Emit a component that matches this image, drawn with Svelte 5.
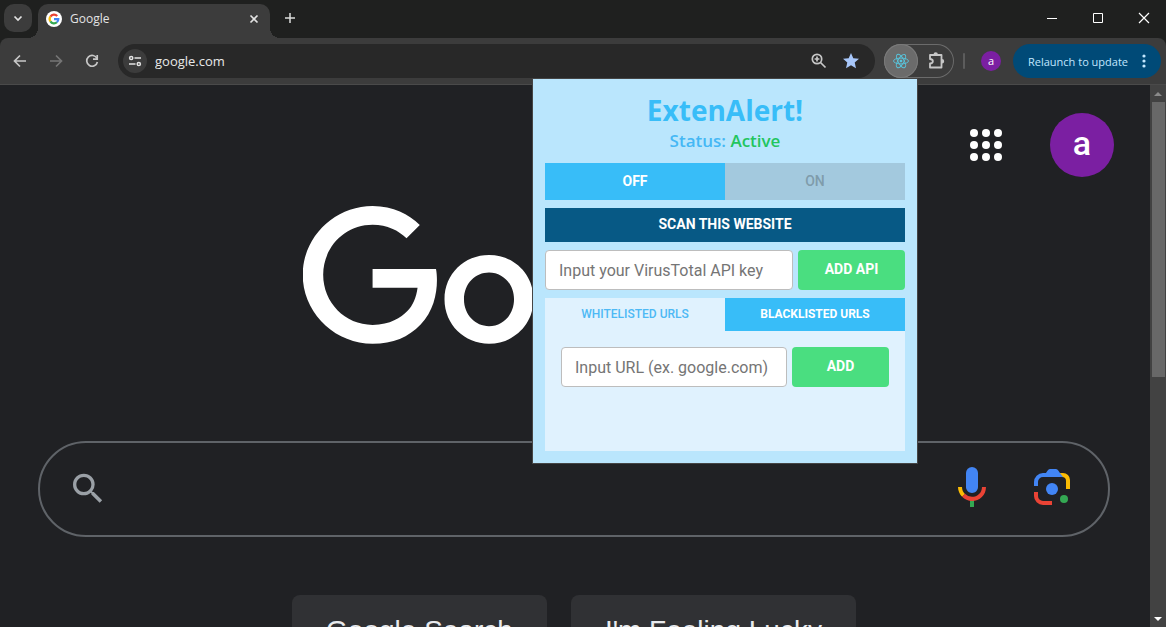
<script>
  let apiKey = $state('');
  let url = $state('');
  let query = $state('');
  let address = $state('google.com');
  let list = $state('white');
  const dots = [0, 1, 2, 3, 4, 5, 6, 7, 8];
</script>

<div class="browser">
  <header class="tabstrip">
    <button class="tab-search" aria-label="Search tabs">
      <svg width="28" height="28" viewBox="0 0 28 28"><path d="M10.500 12.500 14 16l3.500-3.500" fill="none" stroke="#e3e3e3" stroke-width="1.700" /></svg>
    </button>
    <div class="tab">
      <svg class="favicon" width="16" height="16" viewBox="0 0 16 16">
        <circle cx="8" cy="8" r="8" fill="#fff" />
        <g fill="none" stroke-width="2.200">
          <path d="M4.400 5.600A4.300 4.300 0 0 1 11.200 5.100" stroke="#ea4335" />
          <path d="M4.400 10.400A4.300 4.300 0 0 1 4.400 5.600" stroke="#fbbc05" />
          <path d="M10.900 11.300A4.300 4.300 0 0 1 4.400 10.400" stroke="#34a853" />
          <path d="M8 8.200H12.300A4.300 4.300 0 0 1 10.900 11.300" stroke="#4285f4" />
        </g>
      </svg>
      <span class="tab-title">Google</span>
      <button class="plain close" aria-label="Close tab">
        <svg width="16" height="16" viewBox="0 0 16 16"><path d="m4.500 4.500 7 7m0-7-7 7" stroke="#e3e3e3" stroke-width="1.600" /></svg>
      </button>
    </div>
    <button class="plain newtab" aria-label="New tab">
      <svg width="16" height="16" viewBox="0 0 16 16"><path d="M8 3v10M3 8h10" stroke="#dcdcdc" stroke-width="1.500" /></svg>
    </button>
    <div class="window-controls">
      <button class="plain" aria-label="Minimize"><svg width="12" height="12"><path d="M1 6.500h10" stroke="#fff" /></svg></button>
      <button class="plain" aria-label="Maximize"><svg width="12" height="12"><path d="M1.500 1.500h9v9h-9z" fill="none" stroke="#fff" /></svg></button>
      <button class="plain" aria-label="Close"><svg width="12" height="12"><path d="m1 1 10 10M11 1 1 11" stroke="#fff" stroke-width="1.200" /></svg></button>
    </div>
  </header>

  <nav class="toolbar">
    <div class="nav-buttons">
      <button class="plain" aria-label="Back"><svg width="16" height="16" viewBox="0 0 16 16"><path d="M14 8H3M8 2.500 2.500 8 8 13.500" fill="none" stroke="#c7c7c7" stroke-width="1.700" /></svg></button>
      <button class="plain" aria-label="Forward"><svg width="16" height="16" viewBox="0 0 16 16"><path d="M2 8h11M8 2.500 13.500 8 8 13.500" fill="none" stroke="#757575" stroke-width="1.700" /></svg></button>
      <button class="plain" aria-label="Reload"><svg width="16" height="16" viewBox="0 0 16 16"><path d="M13 5.500A5.400 5.400 0 1 0 13.400 9" fill="none" stroke="#c7c7c7" stroke-width="1.700" /><path d="M13.200 2v4.200H9" fill="none" stroke="#c7c7c7" stroke-width="1.700" /></svg></button>
    </div>
    <div class="omnibox">
      <button class="plain site-info" aria-label="View site information">
        <svg width="14" height="14" viewBox="0 0 14 14" fill="none" stroke="#e3e3e3" stroke-width="1.500"><circle cx="3.200" cy="4" r="1.600" /><path d="M6.500 4H13M1 10h6.500" /><circle cx="10.800" cy="10" r="1.600" /></svg>
      </button>
      <input class="address" aria-label="Address" bind:value={address} />
      <button class="plain" aria-label="Zoom"><svg width="18" height="18" viewBox="0 0 18 18" fill="none" stroke="#c7c7c7" stroke-width="1.700"><circle cx="7" cy="7" r="4.700" /><path d="m10.500 10.500 5 5M7 4.600v4.800M4.600 7h4.800" /></svg></button>
      <button class="plain" aria-label="Bookmark"><svg width="18" height="18" viewBox="0 0 18 18"><path d="m9 1 2.300 5.300 5.700.5-4.300 3.800 1.300 5.700L9 13.300l-5 3 1.300-5.700L1 6.800l5.700-.5z" fill="#a8c7fa" /></svg></button>
    </div>
    <div class="extensions">
      <button class="plain active-ext" aria-label="ExtenAlert">
        <svg width="18" height="18" viewBox="0 0 18 18" fill="none" stroke="#58c4dc" stroke-width=".9"><ellipse cx="9" cy="9" rx="7.500" ry="2.900" /><ellipse cx="9" cy="9" rx="7.500" ry="2.900" transform="rotate(60 9 9)" /><ellipse cx="9" cy="9" rx="7.500" ry="2.900" transform="rotate(120 9 9)" /><circle cx="9" cy="9" r="1" fill="#61dafb" /></svg>
      </button>
      <button class="plain" aria-label="Extensions">
        <svg width="20" height="20" viewBox="0 0 20 20"><path d="M4 4h11.500v12.500H4v-4c3.800-.2 3.800-4.300 0-4.500z" fill="none" stroke="#c7c7c7" stroke-width="1.800" stroke-linejoin="round" /><path d="M7.500 3.500a2.200 2.200 0 0 1 4.400 0zM16 8a2.200 2.200 0 0 1 0 4.400z" fill="#c7c7c7" /></svg>
      </button>
    </div>
    <span class="divider"></span>
    <button class="plain profile">a</button>
    <button class="relaunch">Relaunch to update
      <svg width="4" height="16" viewBox="0 0 4 16" fill="#c2e7ff"><circle cx="2" cy="3" r="1.600" /><circle cx="2" cy="8" r="1.600" /><circle cx="2" cy="13" r="1.600" /></svg>
    </button>
  </nav>

  <div class="viewport">
    <main class="page">
      <div class="account">
        <button class="plain" aria-label="Google apps">
          <svg width="32" height="32" viewBox="0 0 32 32" fill="#fff">
            {#each dots as n}<circle cx={4 + (n % 3) * 12} cy={4 + Math.floor(n / 3) * 12} r="4" />{/each}
          </svg>
        </button>
        <button class="plain avatar">a</button>
      </div>
      <svg class="logo" viewBox="0.5 0 272 92" fill="#fff" role="img" aria-label="Google">
        <path d="M35.290 41.410V32H67c.31 1.640.47 3.580.47 5.680 0 7.060-1.930 15.790-8.150 22.010-6.050 6.300-13.780 9.660-24.020 9.660C16.320 69.350.36 53.890.36 34.910.36 15.930 16.320.47 35.300.47c10.500 0 17.980 4.120 23.600 9.490l-6.640 6.640c-4.030-3.780-9.490-6.720-16.970-6.720-13.860 0-24.700 11.170-24.700 25.030 0 13.860 10.840 25.030 24.700 25.030 8.990 0 14.110-3.610 17.390-6.890 2.660-2.660 4.410-6.460 5.100-11.650z" />
        <path d="M115.750 47.180c0 12.770-9.990 22.180-22.250 22.180s-22.250-9.410-22.250-22.180C71.250 34.320 81.240 25 93.500 25s22.250 9.320 22.250 22.180zm-9.740 0c0-7.980-5.790-13.440-12.510-13.440S80.990 39.200 80.990 47.180c0 7.900 5.790 13.440 12.510 13.440s12.510-5.550 12.510-13.440z" />
      </svg>
      <form class="search" onsubmit={(e) => e.preventDefault()}>
        <div class="searchbox">
          <svg width="40" height="40" viewBox="0 -1 24 24" fill="#9aa0a6"><path d="M15.500 14h-.79l-.28-.27A6.471 6.471 0 0 0 16 9.500 6.500 6.500 0 1 0 9.500 16c1.610 0 3.090-.59 4.230-1.570l.27.28v.79l5 4.990L20.490 19l-4.990-5zm-6 0C7.010 14 5 11.990 5 9.500S7.010 5 9.500 5 14 7.010 14 9.500 11.990 14 9.500 14z" /></svg>
          <input aria-label="Search" bind:value={query} />
          <button class="plain" aria-label="Search by voice">
            <svg width="48" height="48" viewBox="0 0 24 24"><path fill="#4285f4" d="M12 15c1.660 0 3-1.310 3-2.970V4.970a3 3 0 0 0-6 0v7.060C9 13.690 10.340 15 12 15z" /><path fill="#34a853" d="M11 18.080h2V22h-2z" /><path fill="#fbbc05" d="M7.050 16.870C5.780 15.590 5 13.850 5 12h2c0 1.380.56 2.630 1.470 3.540z" /><path fill="#ea4335" d="M12 16.930a4.970 5.250 0 0 1-3.540-1.550l-1.410 1.490C8.310 18.140 10.050 19 12 19c3.870 0 6.990-2.920 6.990-7h-1.990c0 2.920-2.240 4.930-5 4.930z" /></svg>
          </button>
          <button class="plain" aria-label="Search by image">
            <svg width="48" height="48" viewBox="0 0 48 48"><path d="M8 23v-4a7 7 0 0 1 7-7h5" fill="none" stroke="#4285f4" stroke-width="4" /><path d="M31 10H35a7 7 0 0 1 7 7v9h-4v-8a4 4 0 0 0-4-4z" fill="#fbbc04" /><path d="M17 10.500c1.800 0 2.300-4.500 5-4.500h6c2 0 2.700 2.500 4 4l3 4H17z" fill="#4285f4" /><path d="M8 29v4a7 7 0 0 0 7 7h9" fill="none" stroke="#ea4335" stroke-width="4" /><circle cx="24" cy="26" r="6" fill="#4285f4" /><circle cx="36" cy="36" r="4" fill="#34a853" /></svg>
          </button>
        </div>
        <div class="actions">
          <button type="submit">Google Search</button>
          <button type="button">I'm Feeling Lucky</button>
        </div>
      </form>
    </main>
    <div class="scrollbar">
      <svg width="16" height="16"><path d="m4 11 4-4 4 4z" fill="#8a8a8a" /></svg>
      <div class="track"><div class="thumb"></div></div>
      <svg width="16" height="16"><path d="m4 6 4 4 4-4z" fill="#fff" /></svg>
    </div>
  </div>

  <section class="popup">
    <div class="heading">
      <h1>ExtenAlert!</h1>
      <p>Status: <span>Active</span></p>
    </div>
    <div class="toggle">
      <button>OFF</button>
      <button disabled>ON</button>
    </div>
    <button class="scan">SCAN THIS WEBSITE</button>
    <div class="entry">
      <input aria-label="VirusTotal API key" placeholder="Input your VirusTotal API key" bind:value={apiKey} />
      <button class="wide">ADD API</button>
    </div>
    <div class="lists">
      <div class="tabs">
        <button class:selected={list === 'white'} onclick={() => (list = 'white')}>WHITELISTED URLS</button>
        <button class:selected={list === 'black'} onclick={() => (list = 'black')}>BLACKLISTED URLS</button>
      </div>
      <div class="panel">
        <div class="entry">
          <input aria-label="URL" placeholder="Input URL (ex. google.com)" bind:value={url} />
          <button>ADD</button>
        </div>
      </div>
    </div>
  </section>
</div>

<style>
  :global(body) { margin: 0; background: #202124; }
  .browser, .browser * { box-sizing: border-box; }
  .browser {
    position: relative;
    display: flex;
    flex-direction: column;
    height: 100vh;
    overflow: hidden;
    background: #1f201f;
    font-family: "Open Sans", "Noto Sans", sans-serif;
  }
  button, input { font: inherit; border: 0; margin: 0; padding: 0; }
  input { min-width: 0; outline: 0; }
  svg { display: block; flex: none; }
  .plain { display: grid; place-items: center; background: none; color: inherit; }

  .tabstrip { display: flex; flex: none; height: 38px; padding: 4px 0 0 4px; }
  .tab-search { width: 28px; height: 28px; border-radius: 10px; background: #3c3c3c; }
  .tab {
    position: relative;
    display: flex;
    align-items: center;
    gap: 8px;
    width: 232px;
    margin-left: 6px;
    padding: 0 8px 5px;
    border-radius: 10px 10px 0 0;
    background: #3c3c3c;
    color: #e3e3e3;
    font-size: 12px;
  }
  .tab::before, .tab::after { content: ''; position: absolute; bottom: 0; width: 10px; height: 10px; }
  .tab::before { left: -10px; background: radial-gradient(circle at 0 0, transparent 10px, #3c3c3c 10px); }
  .tab::after { right: -10px; background: radial-gradient(circle at 100% 0, transparent 10px, #3c3c3c 10px); }
  .tab-title { flex: 1; }
  .newtab { width: 28px; height: 28px; margin-left: 6px; }
  .window-controls { display: flex; margin: 0 -1px 0 auto; height: 28px; }
  .window-controls button { width: 46px; }

  .toolbar {
    display: flex;
    flex: none;
    align-items: center;
    height: 47px;
    padding: 0 5px 0 2px;
    border-bottom: 1px solid #4a4a4a;
    border-radius: 8px 8px 0 0;
    background: #3c3c3c;
  }
  .nav-buttons { display: flex; margin-right: 8px; }
  .nav-buttons button { width: 36px; height: 34px; }
  .omnibox {
    display: flex;
    flex: 1;
    align-items: center;
    gap: 14px;
    height: 34px;
    padding: 0 15px 0 5px;
    border-radius: 17px;
    background: #282828;
  }
  .site-info { width: 24px; height: 24px; margin-right: -6px; border-radius: 50%; background: #3c3c3c; }
  .address { flex: 1; background: none; color: #e8e8e8; font-size: 13px; }
  .extensions { display: flex; width: 70px; height: 34px; margin-left: 9px; border-radius: 17px; box-shadow: inset 0 0 0 1px #6b6b6b; }
  .extensions button { flex: 1; }
  .extensions .active-ext { flex: none; width: 34px; border-radius: 50%; background: #6b6b6b; box-shadow: inset 0 0 0 1px #7a7a7a; }
  .divider { width: 2px; height: 16px; margin: 0 16px 0 9px; border-radius: 1px; background: #5c5c5c; }
  .profile { width: 20px; height: 20px; border-radius: 50%; background: #7b1fa2; color: #fff; font-size: 11px; line-height: 18px; }
  .relaunch {
    display: flex;
    align-items: center;
    justify-content: space-between;
    width: 148px;
    height: 34px;
    margin-left: 12px;
    padding: 0 15px;
    border-radius: 17px;
    background: #004a77;
    color: #c2e7ff;
    font-size: 11px;
    white-space: nowrap;
  }

  .viewport { display: flex; flex: 1; min-height: 0; background: #202124; }
  .page { display: flex; flex: 1; flex-direction: column; align-items: center; min-width: 0; overflow: hidden; }
  .account { display: flex; flex: none; align-self: flex-end; align-items: center; gap: 48px; padding: 28px 36px; }
  .avatar {
    width: 64px;
    height: 64px;
    padding-bottom: 4px;
    border-radius: 50%;
    background: #7b1fa2;
    color: #fff;
    font-family: Roboto, sans-serif;
    font-size: 34px;
    font-weight: 500;
  }
  .logo { width: 544px; height: 184px; }
  .search { display: flex; flex: none; flex-direction: column; align-items: center; align-self: stretch; margin-top: 52px; padding: 0 40px 0 38px; }
  .searchbox {
    display: flex;
    align-items: center;
    gap: 32px;
    width: 100%;
    max-width: 1168px;
    height: 96px;
    padding: 0 32px 4px 28px;
    border: 2px solid #5f6368;
    border-radius: 48px;
  }
  .searchbox input { flex: 1; background: none; color: #e8eaed; font-size: 32px; }
  .actions { display: flex; gap: 24px; margin-top: 58px; }
  .actions button {
    height: 72px;
    padding: 0 34px;
    border-radius: 8px;
    background: #303134;
    color: #e8eaed;
    font-family: "Liberation Sans", Arial, sans-serif;
    font-size: 28px;
  }

  .scrollbar { display: flex; flex: none; flex-direction: column; width: 16px; background: #424242; }
  .track { flex: 1; padding: 1px 1px 0 2px; }
  .thumb { height: 54%; background: #686868; }

  .popup {
    position: absolute;
    top: 79px;
    right: 249px;
    display: flex;
    flex-direction: column;
    gap: 8px;
    width: 384px;
    padding: 12px;
    background: #bae6fd;
    box-shadow: 0 0 0 1px #454545;
  }
  .heading { padding-bottom: 2px; text-align: center; color: #38bdf8; }
  h1 { margin: 0; font-size: 28px; line-height: 38px; font-weight: 700; }
  p { margin: 0; font-size: 17px; line-height: 24px; font-weight: 600; color: #45b8f5; }
  p span { color: #22c55e; }
  .popup button { font-family: Roboto, sans-serif; font-size: 14px; font-weight: 700; color: #fff; }
  .toggle, .tabs { display: grid; grid-template-columns: 1fr 1fr; }
  .toggle button { height: 37px; padding-bottom: 2px; background: #38bdf8; }
  .toggle button:disabled { background: #a3c9de; color: #7f9cab; font-weight: 500; }
  .popup .scan { height: 34px; padding-bottom: 2px; background: #075985; }
  .entry { display: flex; gap: 5px; }
  .entry input {
    flex: 1;
    height: 40px;
    padding: 0 13px;
    border: 1px solid #bdbdbd;
    border-radius: 4px;
    background: #fff;
    color: #333;
    font-family: Roboto, sans-serif;
    font-size: 16px;
  }
  .entry input::placeholder { color: #757575; opacity: 1; }
  .entry button { width: 97px; padding-bottom: 2px; border-radius: 4px; background: #4ade80; }
  .entry .wide { width: 107px; }
  .lists { background: #e0f2fe; }
  .tabs button { height: 33px; padding-bottom: 2px; background: #38bdf8; font-size: 12px; }
  .popup .tabs .selected { background: none; color: #4db9f5; font-weight: 500; }
  .popup .tabs button { font-size: 12px; }
  .panel { min-height: 120px; padding: 16px; }
</style>
